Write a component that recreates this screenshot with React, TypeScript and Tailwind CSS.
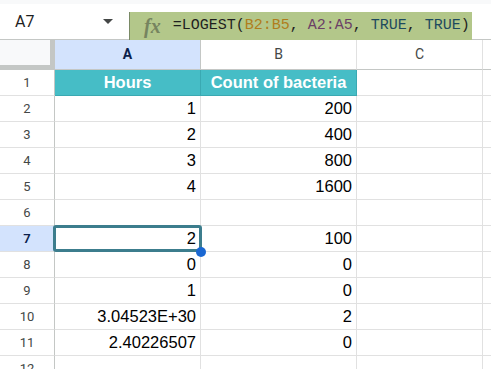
import React from "react";

type Row = {
  n: number;
  a: string;
  b: string;
};

const rows: Row[] = [
  { n: 2, a: "1", b: "200" },
  { n: 3, a: "2", b: "400" },
  { n: 4, a: "3", b: "800" },
  { n: 5, a: "4", b: "1600" },
  { n: 6, a: "", b: "" },
  { n: 7, a: "2", b: "100" },
  { n: 8, a: "0", b: "0" },
  { n: 9, a: "1", b: "0" },
  { n: 10, a: "3.04523E+30", b: "2" },
  { n: 11, a: "2.40226507", b: "0" },
  { n: 12, a: "", b: "" },
];

const cell =
  "h-[26px] shrink-0 border-r border-b border-[#e1e1e1] flex items-center justify-end pr-[4px] text-[16.5px] text-black";

function RowHead({ n, active }: { n: number; active?: boolean }) {
  return (
    <div
      className={`flex h-[26px] w-[55px] shrink-0 items-center justify-center border-r border-b border-r-[#c4c7c5] border-b-[#e1e1e1] text-[13px] ${
        active ? "bg-[#d3e3fd] font-semibold text-[#0b1f4b]" : "bg-white text-[#444746]"
      }`}
      style={{ fontFamily: "Roboto, Arial, sans-serif" }}
    >
      {n}
    </div>
  );
}

export default function App() {
  return (
    <div
      className="h-[369px] w-[491px] overflow-hidden bg-white"
      style={{ fontFamily: "'Liberation Sans', Arial, sans-serif" }}
    >
      <div className="h-[4px] bg-[#f8f9fa]" />

      {/* name box + formula bar */}
      <div className="flex h-[36px] border-b border-[#c4c7c5]">
        <div className="flex w-[129px] shrink-0 items-center justify-between pl-[15px] pr-[16px]">
          <span
            className="text-[16px] text-[#1f1f1f]"
            style={{ fontFamily: "Roboto, Arial, sans-serif" }}
          >
            A7
          </span>
          <svg width="10" height="5" viewBox="0 0 10 5">
            <path d="M0 0h10L5 5z" fill="#444746" />
          </svg>
        </div>
        <div className="mt-[8px] flex h-[28px] w-[343px] items-center border-l border-[#7a8a66] bg-[#b3c78a] pl-[14px]">
          <span
            className="mr-[12px] text-[20px] font-bold italic leading-none text-[#76845f]"
            style={{ fontFamily: "'Liberation Serif', serif" }}
          >
            fx
          </span>
          <span
            className="whitespace-nowrap text-[15px] text-[#1f1f1f]"
            style={{ fontFamily: "'Liberation Mono', monospace" }}
          >
            =LOGEST(<span className="text-[#b07d1c]">B2:B5</span>,{" "}
            <span className="text-[#6b3f66]">A2:A5</span>,{" "}
            <span className="text-[#1e4a5e]">TRUE</span>,{" "}
            <span className="text-[#1e4a5e]">TRUE</span>)
          </span>
        </div>
      </div>

      {/* column headers */}
      <div className="flex h-[30px]">
        <div className="flex w-[55px] shrink-0 flex-col">
          <div className="flex h-[25px]">
            <div className="w-[50px] bg-[#f8f9fa]" />
            <div className="w-[5px] bg-[#c4c7c5]" />
          </div>
          <div className="h-[5px] bg-[#c4c7c5]" />
        </div>
        <div
          className="flex w-[146px] shrink-0 items-center justify-center border-r border-b border-[#c4c7c5] bg-[#d3e3fd] text-[14px] font-bold text-[#0b1f4b]"
          style={{ fontFamily: "Roboto, Arial, sans-serif" }}
        >
          A
        </div>
        <div
          className="flex w-[156px] shrink-0 items-center justify-center border-r border-b border-[#e1e1e1] border-b-[#c4c7c5] text-[14px] text-[#444746]"
          style={{ fontFamily: "Roboto, Arial, sans-serif" }}
        >
          B
        </div>
        <div
          className="flex w-[126px] shrink-0 items-center justify-center border-r border-b border-[#e1e1e1] border-b-[#c4c7c5] text-[14px] text-[#444746]"
          style={{ fontFamily: "Roboto, Arial, sans-serif" }}
        >
          C
        </div>
        <div className="flex-1 border-b border-[#c4c7c5]" />
      </div>

      {/* header row */}
      <div className="flex">
        <RowHead n={1} />
        <div className="flex h-[26px] w-[146px] shrink-0 items-center justify-center border-r border-b border-[#3aa9b2] bg-[#46bdc6] text-[16.5px] font-bold text-white">
          Hours
        </div>
        <div className="flex h-[26px] w-[156px] shrink-0 items-center justify-center border-r border-b border-[#3aa9b2] bg-[#46bdc6] text-[16.5px] font-bold text-white">
          Count of bacteria
        </div>
        <div className={`${cell} w-[126px]`} />
        <div className="h-[26px] flex-1 border-b border-[#e1e1e1]" />
      </div>

      {rows.map((r) => (
        <div key={r.n} className="flex">
          <RowHead n={r.n} active={r.n === 7} />
          <div className={`${cell} relative w-[146px] ${r.n === 7 ? "z-10" : ""}`}>
            {r.a}
            {r.n === 7 && (
              <>
                <div className="absolute -top-[1px] -left-[2px] -right-[2px] -bottom-[1px] rounded-[3px] border-[3px] border-[#3c7d8d]" />
                <div className="absolute -right-[6px] -bottom-[6px] h-[10px] w-[10px] rounded-full bg-[#1a67d2]" />
              </>
            )}
          </div>
          <div className={`${cell} w-[156px]`}>{r.b}</div>
          <div className={`${cell} w-[126px]`} />
          <div className="h-[26px] flex-1 border-b border-[#e1e1e1]" />
        </div>
      ))}
    </div>
  );
}
